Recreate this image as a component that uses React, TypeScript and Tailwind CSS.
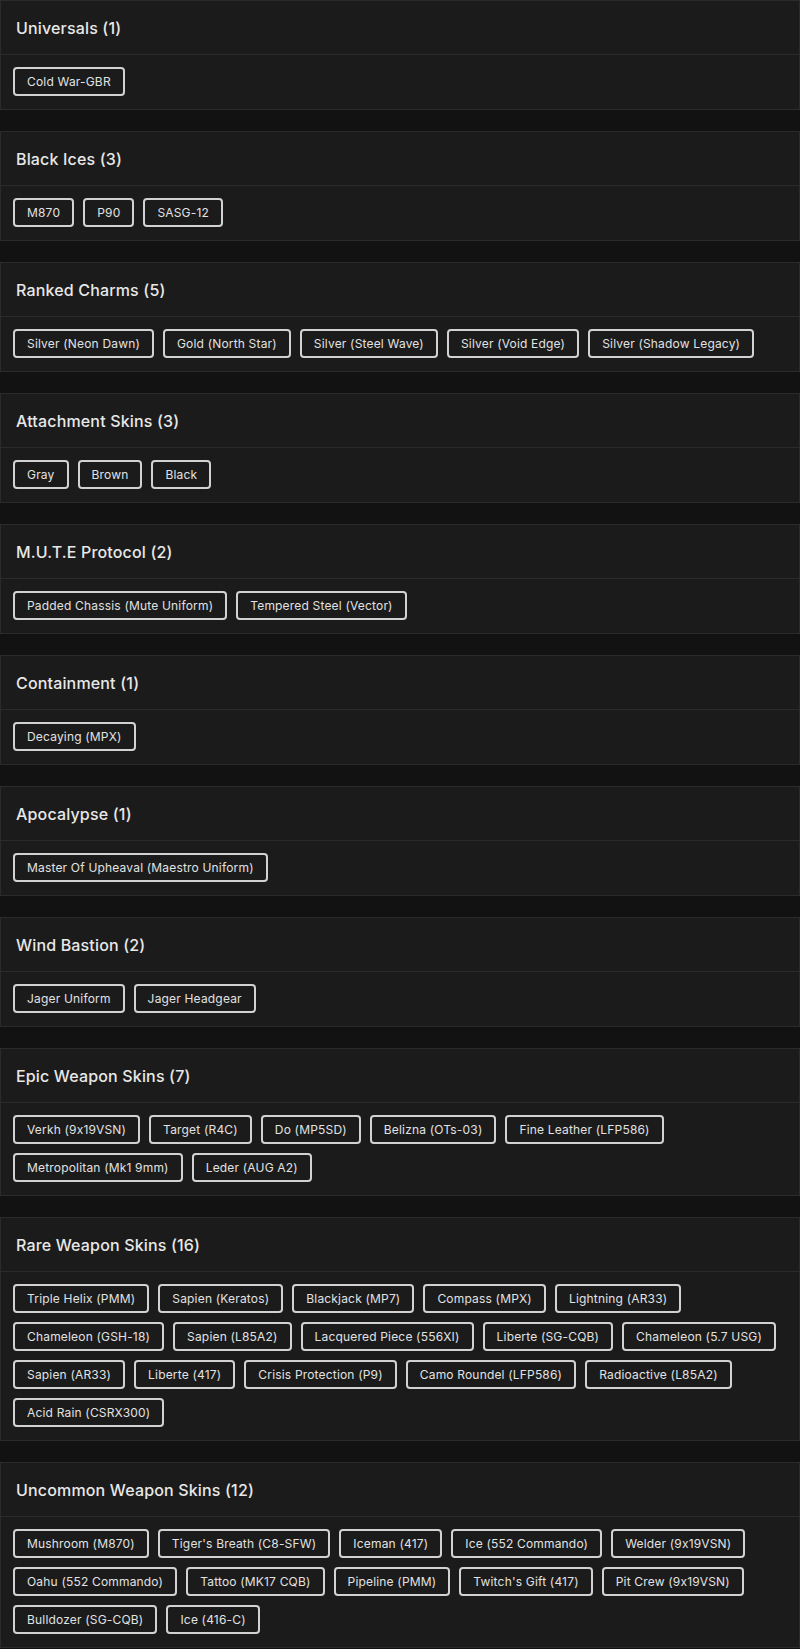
import React from "react";

type Group = { title: string; items: string[] };

const GROUPS: Group[] = [
  { title: "Universals", items: ["Cold War-GBR"] },
  { title: "Black Ices", items: ["M870", "P90", "SASG-12"] },
  {
    title: "Ranked Charms",
    items: ["Silver (Neon Dawn)", "Gold (North Star)", "Silver (Steel Wave)", "Silver (Void Edge)", "Silver (Shadow Legacy)"],
  },
  { title: "Attachment Skins", items: ["Gray", "Brown", "Black"] },
  { title: "M.U.T.E Protocol", items: ["Padded Chassis (Mute Uniform)", "Tempered Steel (Vector)"] },
  { title: "Containment", items: ["Decaying (MPX)"] },
  { title: "Apocalypse", items: ["Master Of Upheaval (Maestro Uniform)"] },
  { title: "Wind Bastion", items: ["Jager Uniform", "Jager Headgear"] },
  {
    title: "Epic Weapon Skins",
    items: [
      "Verkh (9x19VSN)",
      "Target (R4C)",
      "Do (MP5SD)",
      "Belizna (OTs-03)",
      "Fine Leather (LFP586)",
      "Metropolitan (Mk1 9mm)",
      "Leder (AUG A2)",
    ],
  },
  {
    title: "Rare Weapon Skins",
    items: [
      "Triple Helix (PMM)",
      "Sapien (Keratos)",
      "Blackjack (MP7)",
      "Compass (MPX)",
      "Lightning (AR33)",
      "Chameleon (GSH-18)",
      "Sapien (L85A2)",
      "Lacquered Piece (556XI)",
      "Liberte (SG-CQB)",
      "Chameleon (5.7 USG)",
      "Sapien (AR33)",
      "Liberte (417)",
      "Crisis Protection (P9)",
      "Camo Roundel (LFP586)",
      "Radioactive (L85A2)",
      "Acid Rain (CSRX300)",
    ],
  },
  {
    title: "Uncommon Weapon Skins",
    items: [
      "Mushroom (M870)",
      "Tiger's Breath (C8-SFW)",
      "Iceman (417)",
      "Ice (552 Commando)",
      "Welder (9x19VSN)",
      "Oahu (552 Commando)",
      "Tattoo (MK17 CQB)",
      "Pipeline (PMM)",
      "Twitch's Gift (417)",
      "Pit Crew (9x19VSN)",
      "Bulldozer (SG-CQB)",
      "Ice (416-C)",
    ],
  },
];

function Section({ group }: { group: Group }) {
  return (
    <div className="bg-[#1b1b1b] border border-[#2b2b2b] mb-[21px]">
      {/* Header */}
      <div className="h-[54px] flex items-center px-[15px] border-b border-[#2b2b2b]">
        <h2 className="text-[16px] font-medium text-[#e8e8e8] tracking-[0.01em]">
          {group.title} ({group.items.length})
        </h2>
      </div>
      {/* Items */}
      <div className="flex flex-wrap gap-[9px] px-3 pt-3 pb-[13px]">
        {group.items.map((item) => (
          <span
            key={item}
            className="h-[29px] px-3 flex items-center border-2 border-[#d2d2d2] rounded-[4px] text-[12px] text-[#e2e2e2] tracking-[0.015em] whitespace-nowrap"
          >
            {item}
          </span>
        ))}
      </div>
    </div>
  );
}

export default function App() {
  return (
    <div className="min-h-screen bg-[#121212] font-['Inter','Noto_Sans',sans-serif] overflow-hidden">
      {GROUPS.map((g) => (
        <Section key={g.title} group={g} />
      ))}
    </div>
  );
}
